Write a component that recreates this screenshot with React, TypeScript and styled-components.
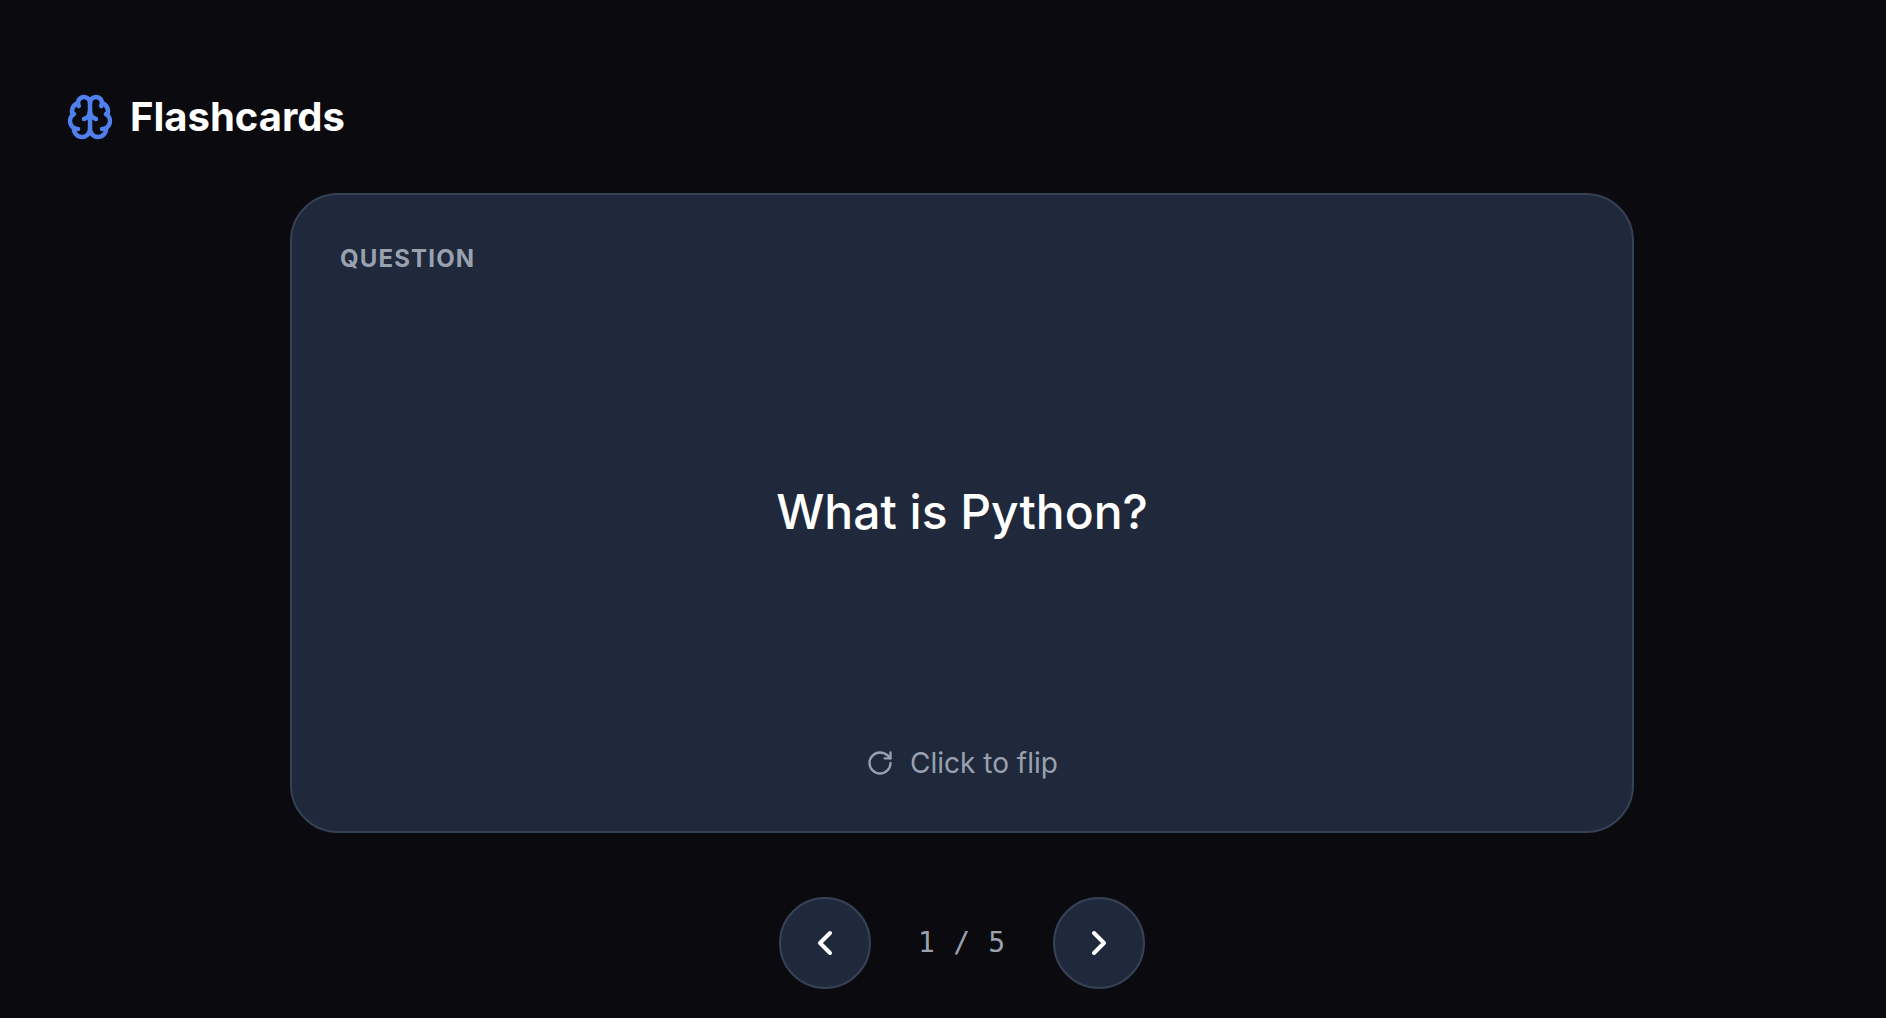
import styled, { createGlobalStyle } from "styled-components";
import { Brain, ChevronLeft, ChevronRight, RotateCw } from "lucide-react";

const GlobalStyle = createGlobalStyle`
  html, body {
    margin: 0;
    padding: 0;
    background-color: #0a0a0f;
  }
`;

export default function App() {
  return (
    <Page>
      <GlobalStyle />
      <Header>
        <Brain size={48} color="#4f80ed" strokeWidth={2.25} />
        <Title>Flashcards</Title>
      </Header>

      <Card>
        <CardLabel>QUESTION</CardLabel>
        <CardBody>
          <Question>What is Python?</Question>
        </CardBody>
        <FlipHint>
          <RotateCw size={28} strokeWidth={2} />
          <span>Click to flip</span>
        </FlipHint>
      </Card>

      <Controls>
        <NavButton aria-label="Previous">
          <ChevronLeft size={40} strokeWidth={2.4} />
        </NavButton>
        <Counter>1 / 5</Counter>
        <NavButton aria-label="Next">
          <ChevronRight size={40} strokeWidth={2.4} />
        </NavButton>
      </Controls>
    </Page>
  );
}

const Page = styled.div`
  display: flex;
  flex-direction: column;
  box-sizing: border-box;
  width: 100%;
  height: 1018px;
  padding: 93px 28px 0 66px;
  overflow: hidden;

  font-family: "Inter", sans-serif;
  background-color: #0a0a0f;
`;

const Header = styled.div`
  display: flex;
  flex-direction: row;
  align-items: center;
  gap: 16px;

  height: 48px;
  margin-bottom: 52px;
`;

const Title = styled.h1`
  margin: 0;

  font-weight: 700;
  font-size: 40px;
  line-height: 48px;

  color: #ffffff;
`;

const Card = styled.div`
  display: flex;
  flex-direction: column;
  box-sizing: border-box;

  width: 1344px;
  height: 640px;
  margin: 0 auto;
  padding: 48px;

  background-color: #1f293b;
  border: 2px solid #364155;
  border-radius: 48px;
`;

const CardLabel = styled.div`
  font-weight: 700;
  font-size: 24px;
  line-height: 32px;
  letter-spacing: 1.15px;

  color: #99a1af;
`;

const CardBody = styled.div`
  display: flex;
  flex: 1;
  align-items: center;
  justify-content: center;
  padding-top: 6px;
`;

const Question = styled.div`
  font-weight: 450;
  font-size: 48px;
  line-height: 60px;

  color: #ffffff;
`;

const FlipHint = styled.div`
  display: flex;
  flex-direction: row;
  align-items: center;
  justify-content: center;
  gap: 16px;

  font-size: 28px;
  line-height: 40px;

  color: #99a1af;
`;

const Controls = styled.div`
  display: flex;
  flex-direction: row;
  align-items: center;
  justify-content: center;
  gap: 47px;

  margin-top: 64px;
`;

const NavButton = styled.button`
  display: flex;
  align-items: center;
  justify-content: center;
  box-sizing: border-box;

  width: 92px;
  height: 92px;
  padding: 0;

  color: #ffffff;
  background-color: #1f293b;
  border: 2px solid #364155;
  border-radius: 50%;
  cursor: pointer;
`;

const Counter = styled.div`
  font-family: "DejaVu Sans Mono", monospace;
  font-size: 28px;
  line-height: 40px;
  letter-spacing: 0.7px;
  white-space: pre;

  color: #99a1af;
`;
